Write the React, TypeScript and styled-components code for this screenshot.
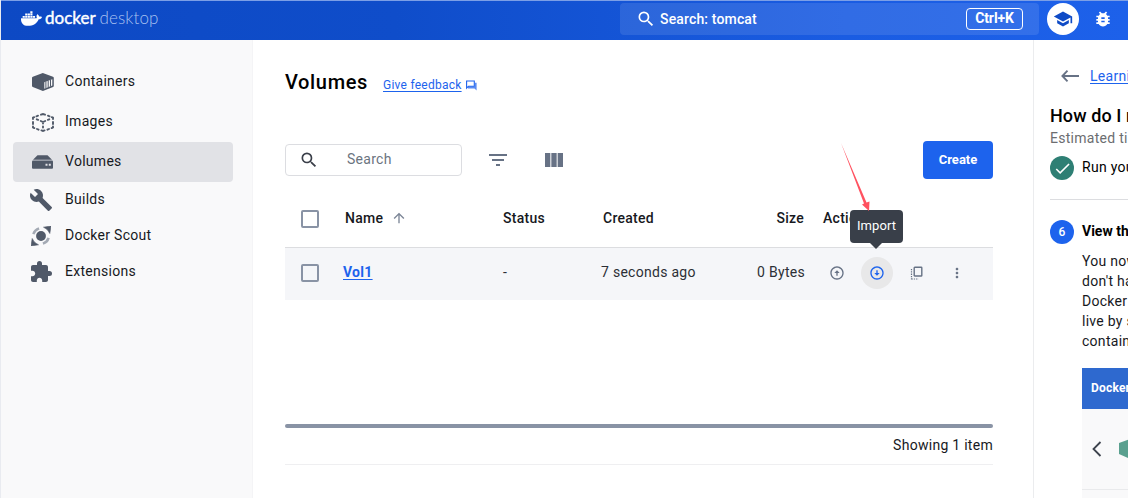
import React from 'react';
import styled, { createGlobalStyle } from 'styled-components';
import {
  MdSearch, MdFilterList, MdSchool, MdBugReport, MdBuild, MdExtension, MdArrowUpward,
  MdOutlineArrowCircleUp, MdOutlineArrowCircleDown, MdMoreVert, MdCheck,
} from 'react-icons/md';
import { FaDocker } from 'react-icons/fa';

const Global = createGlobalStyle`
  *, *::before, *::after { box-sizing: border-box; }
  body { margin: 0; background: #fff; overflow: hidden; }
  svg { display: block; flex: none; }
`;

const Window = styled.div`
  width: 1128px;
  height: 498px;
  overflow: hidden;
  display: flex;
  flex-direction: column;
  font-family: Roboto, 'Liberation Sans', sans-serif;
  font-size: 14px;
  line-height: 20px;
  letter-spacing: 0.28px;
  color: #17191e;
  white-space: nowrap;
  border-left: 1px solid #e9ebf0;
`;

const Header = styled.header`
  flex: none;
  height: 40px;
  display: flex;
  align-items: center;
  border-top: 1px solid #7c9fe6;
  background: linear-gradient(90deg, #0d49c4 0%, #0f4dca 35%, #1a5ce2 75%, #1d61ea 100%);
  color: #fff;
`;

const Brand = styled.div`
  display: flex;
  width: 619px;
  padding-left: 20px;
  align-items: center;
  gap: 3px;
  & > svg { margin-top: -4px; }
`;

const Wordmark = styled.span<{ $faint?: boolean }>`
  font-family: Lato, sans-serif;
  font-size: 17px;
  line-height: 20px;
  letter-spacing: ${p => (p.$faint ? '0.1px' : '0')};
  font-weight: ${p => (p.$faint ? 300 : 400)};
  -webkit-text-stroke: ${p => (p.$faint ? '0' : '0.4px #fff')};
  color: ${p => (p.$faint ? '#a9c1f0' : '#fff')};
`;

const BrandName = styled.div`
  margin-top: -4px;
`;

const GlobalSearch = styled.div`
  width: 419px;
  height: 32px;
  margin-top: -3px;
  padding: 0 16px 0 16px;
  border-radius: 4px;
  background: rgba(255, 255, 255, 0.1);
  display: flex;
  align-items: center;
`;

const SearchText = styled.span`
  flex: 1;
  margin-left: 4px;
  margin-top: -1px;
  letter-spacing: 0.15px;
  font-weight: 500;
`;

const Shortcut = styled.kbd`
  width: 57px;
  height: 22px;
  border: 1px solid #fff;
  border-radius: 4px;
  font: 700 14px/19px Roboto, sans-serif;
  letter-spacing: -0.1px;
  text-align: center;
`;

const RoundButton = styled.div`
  width: 32px;
  height: 32px;
  margin: -3px 14px 0 8px;
  border-radius: 50%;
  background: #fff;
  color: #0f4bc6;
  display: flex;
  align-items: center;
  justify-content: center;
`;

const BugButton = styled.span`
  margin-top: -3px;
`;

const Body = styled.div`
  flex: 1;
  display: flex;
  min-height: 0;
`;

const Sidebar = styled.nav`
  flex: none;
  width: 252px;
  padding: 22px 0 0 12px;
  background: #f9f9fa;
  border-right: 1px solid #f4f4f6;
`;

const NavItem = styled.div<{ $active?: boolean; $short?: boolean }>`
  width: 220px;
  height: ${p => (p.$short ? 36 : 40)}px;
  padding: 0 0 2px 16px;
  border-radius: 4px;
  display: flex;
  align-items: center;
  background: ${p => (p.$active ? '#e1e2e6' : 'transparent')};
`;

const NavIcon = styled.span<{ $shift?: number }>`
  width: 36px;
  padding-top: 2px;
  padding-left: ${p => p.$shift ?? 0}px;
  color: #505968;
`;

const Main = styled.main`
  flex: none;
  width: 780px;
  padding: 0 40px 0 32px;
  display: flex;
  flex-direction: column;
`;

const TitleRow = styled.div`
  display: flex;
  align-items: center;
  height: 84px;
`;

const Title = styled.h1`
  margin: 0 15px 0 0;
  font-size: 20px;
  line-height: 28px;
  font-weight: 500;
  letter-spacing: 0.65px;
  color: #000;
`;

const Link = styled.a<{ $size?: number; $bold?: boolean }>`
  color: #1d63ed;
  font-size: ${p => p.$size ?? 14}px;
  font-weight: ${p => (p.$bold ? 700 : 400)};
  text-decoration: underline;
  text-underline-offset: 2px;
`;

const FeedbackLink = styled.div`
  display: flex;
  align-items: center;
  gap: 4px;
  padding-top: 6px;
  letter-spacing: 0.25px;
`;

const Toolbar = styled.div`
  margin-top: 17px;
  height: 38px;
  display: flex;
  align-items: center;
  color: #677285;
`;

const SearchField = styled.div`
  width: 177px;
  height: 32px;
  margin-right: 24px;
  padding: 0 13px;
  border: 1px solid #dcdde1;
  border-radius: 4px;
  display: flex;
  align-items: center;
  gap: 28px;
  color: #6b7480;
  & > svg { color: #3a3f49; }
  & > span { margin-top: -2px; }
`;

const CreateButton = styled.button`
  margin-left: auto;
  width: 70px;
  height: 38px;
  padding: 0;
  border: 0;
  border-radius: 4px;
  background: #1d63ed;
  color: #fff;
  font: 700 13px/20px Roboto, sans-serif;
  letter-spacing: 0;
`;

const ColumnsIcon = styled.span`
  margin-left: 32px;
`;

const Row = styled.div<{ $head?: boolean }>`
  display: grid;
  grid-template-columns: 58px 160px 98px 127px 77px 1fr;
  align-items: center;
  height: ${p => (p.$head ? 60 : 52)}px;
  margin-top: ${p => (p.$head ? 9 : 0)}px;
  padding-bottom: ${p => (p.$head ? 0 : 4)}px;
  border-bottom: ${p => (p.$head ? '1px solid #dcdde0' : '0')};
  background: ${p => (p.$head ? '#fff' : '#f5f6f9')};
  font-weight: ${p => (p.$head ? 500 : 400)};
  color: ${p => (p.$head ? '#17191e' : '#2c2f36')};
`;

const Checkbox = styled.span`
  display: block;
  width: 18px;
  height: 18px;
  margin-left: 16px;
  margin-top: 2px;
  border: 2px solid #8993a5;
  border-radius: 2px;
`;

const Cell = styled.span<{ $right?: boolean; $indent?: number; $inset?: number }>`
  display: flex;
  align-items: center;
  gap: 8px;
  justify-content: ${p => (p.$right ? 'flex-end' : 'flex-start')};
  padding-left: ${p => p.$indent ?? 0}px;
  padding-right: ${p => p.$inset ?? 0}px;
  & > svg { margin-top: 1px; }
`;

const Actions = styled.div`
  display: flex;
  gap: 8px;
  padding-left: 16px;
  margin-top: 2px;
`;

const Action = styled.span<{ $hot?: boolean }>`
  position: relative;
  width: 32px;
  height: 32px;
  border-radius: 50%;
  display: flex;
  align-items: center;
  justify-content: center;
  background: ${p => (p.$hot ? '#e8e8e9' : 'transparent')};
  color: ${p => (p.$hot ? '#1d63ed' : '#677285')};
`;

const Tooltip = styled.span`
  position: absolute;
  left: -11px;
  bottom: 46px;
  width: 53px;
  height: 33px;
  border-radius: 4px;
  background: #393f49;
  color: #fff;
  font-size: 13px;
  line-height: 31px;
  letter-spacing: 0.05px;
  text-align: center;
  &::after {
    content: '';
    position: absolute;
    left: 20px;
    top: 33px;
    border: 6.5px solid transparent;
    border-top: 6px solid #393f49;
    border-bottom: 0;
  }
`;

const Pointer = styled.svg`
  position: absolute;
  left: -21px;
  bottom: 77px;
`;

const ScrollBar = styled.div`
  height: 4px;
  margin-top: 124px;
  border-radius: 2px;
  background: #8993a5;
`;

const Footer = styled.div`
  height: 37px;
  padding-top: 7px;
  border-bottom: 1px solid #efeff1;
  text-align: right;
`;

const Guide = styled.aside`
  flex: none;
  width: 420px;
  border-left: 1px solid #ebecee;
  padding: 26px 0 0 16px;
`;

const BackRow = styled.div`
  display: flex;
  align-items: center;
  gap: 10px;
  padding-left: 11px;
  height: 20px;
  color: #677285;
`;

const GuideTitle = styled.h2`
  margin: 18px 0 0;
  font-size: 18px;
  line-height: 24px;
  font-weight: 500;
  letter-spacing: 0.1px;
  color: #000;
`;

const Estimate = styled.div`
  margin-bottom: 8px;
  color: #6c6d70;
`;

const Step = styled.div<{ $bold?: boolean }>`
  display: flex;
  align-items: center;
  gap: 8px;
  height: 24px;
  font-weight: ${p => (p.$bold ? 700 : 400)};
  letter-spacing: ${p => (p.$bold ? '0' : '0.28px')};
  color: #000;
`;

const StepBadge = styled.span<{ $done?: boolean }>`
  width: 24px;
  height: 24px;
  border-radius: 50%;
  display: flex;
  align-items: center;
  justify-content: center;
  background: ${p => (p.$done ? '#2e7f74' : '#1d63ed')};
  color: #fff;
  font-size: 12px;
  font-weight: 500;
`;

const StepLabel = styled.span`
  margin-top: -2px;
`;

const Rule = styled.hr`
  height: 1px;
  margin: 19px 0 20px;
  border: 0;
  background: #dcdde0;
`;

const Paragraph = styled.p`
  margin: 7px 0 0 32px;
`;

const Preview = styled.div`
  margin: 17px 0 0 32px;
  background: #f9f9fa;
`;

const PreviewBar = styled.div`
  height: 41px;
  padding-left: 9px;
  background: #2e69cf;
  color: #fff;
  font: 700 12px/40px Roboto, sans-serif;
  letter-spacing: 0.2px;
`;

const PreviewRow = styled.div`
  height: 81px;
  display: flex;
  align-items: center;
  gap: 17px;
  padding-left: 10px;
  border-bottom: 1px solid #e9eaec;
`;

const PreviewRest = styled.div`
  height: 9px;
`;

const ContainerIcon = () => (
  <svg width="22" height="18" viewBox="0 0 22 18">
    <path d="M10.800 0 L21 3.700 Q21.800 4 21.800 4.800 V13 Q21.800 13.700 21.100 14 L10.900 18 L0.800 14 Q0 13.700 0 13 V4.800 Q0 4 0.800 3.700Z" fill="#505968" />
    <path d="M12.300 9.300 L20.300 6.200 V12.600 L12.300 15.800Z" fill="#f9f9fa" />
    <path d="M13.900 8.500v7M16.200 7.600v7M18.500 6.800v6.800" stroke="#505968" strokeWidth="1" />
  </svg>
);

const ImageIcon = () => (
  <svg width="22" height="19" viewBox="0 0 22 19" fill="none" stroke="#505968" strokeWidth="1.900" strokeLinecap="round">
    <path d="M9 1.700 L11 1 L13 1.700M16 2.700l1.500.6M6 2.700l-1.500.6M1 6V4.700l1.200-.5M21 6V4.700l-1.200-.5M1 9v2M21 9v2M1 13.500v1l1.300.6M21 13.500v1l-1.300.6M5 16l1.500.7M17 16l-1.500.7M9.500 17.400l1.500.5 1.500-.5M4.800 6.300l1.300.5M17.200 6.300l-1.300.5M8.800 8l2.200 1 2.200-1M11 9v1.500M11 13.500v1" />
  </svg>
);

const VolumeIcon = () => (
  <svg width="21" height="14" viewBox="0 0 21 14">
    <path d="M5.500.3h10L20 4.800H1Z" fill="#505968" />
    <path d="M1 5.500h19q1 0 1 1v6.300q0 1-1 1H1q-1 0-1-1V6.500q0-1 1-1Z" fill="#505968" />
    <path d="M13.500 8.800h2v2h-2zM16.800 8.800h2v2h-2z" fill="#e1e2e6" />
  </svg>
);

const ScoutIcon = () => (
  <svg width="20" height="20" viewBox="0 0 20 20">
    <path d="M2.800 8.200A8 8 0 0 1 8.200 2.800M17.200 11.800a8 8 0 0 1-5.400 5.400" fill="none" stroke="#a4aab4" strokeWidth="3.400" />
    <circle cx="10" cy="10" r="6.500" fill="#f9f9fa" />
    <circle cx="10" cy="10" r="4.900" fill="#505968" />
    <path d="M12.500 1.200 L20 0 L18.800 7.500 Q17 3 12.500 1.200ZM7.500 18.800 L0 20 L1.200 12.500 Q3 17 7.500 18.800Z" fill="#505968" stroke="#505968" strokeWidth=".6" />
  </svg>
);

const FeedbackIcon = () => (
  <svg width="11" height="11" viewBox="0 0 11 11">
    <path d="M2 6.500V8.500H8.500L10.600 10.600V2.800H8.800V6.500Z" fill="#5a8bf2" />
    <path d="M.6 8.200V1H8.300V6.200H2.500Z" fill="none" stroke="#1d63ed" strokeWidth="1.100" />
  </svg>
);

const ThreeColumns = () => (
  <svg width="24" height="24" viewBox="0 0 24 24" fill="currentColor">
    <path d="M14.670 5v14H9.330V5h5.340zm1 14H21V5h-5.330v14zm-7.340 0V5H3v14h5.330z" />
  </svg>
);

const CloneIcon = () => (
  <svg width="14" height="14" viewBox="0 0 14 14" fill="none" stroke="currentColor">
    <rect x="4.200" y="1.200" width="7.600" height="8.800" rx=".6" strokeWidth="1.400" />
    <path d="M1.500 3v10.500M1.500 13h7" strokeWidth="1.200" strokeDasharray="1.300 1" />
  </svg>
);

const BackArrow = () => (
  <svg width="19" height="14" viewBox="0 0 19 14" fill="none" stroke="currentColor" strokeWidth="1.900">
    <path d="M18 7H1.500M6.500 1.700L1.400 7L6.500 12.300" />
  </svg>
);

const navItems = [
  { label: 'Containers', icon: <ContainerIcon />, shift: 3 },
  { label: 'Images', icon: <ImageIcon />, shift: 3 },
  { label: 'Volumes', icon: <VolumeIcon />, shift: 3, active: true },
  { label: 'Builds', icon: <MdBuild size={24} />, short: true },
  { label: 'Docker Scout', icon: <ScoutIcon />, shift: 2, short: true },
  { label: 'Extensions', icon: <MdExtension size={24} />, short: true },
];

const paragraph = [
  'You now have a volume. You',
  "don't have to mount it again.",
  'Docker volumes let your data',
  'live by separating it from the',
  'container lifecycle.',
];

export default function App() {
  return (
    <Window>
      <Global />
      <Header>
        <Brand>
          <FaDocker size={21} />
          <BrandName>
            <Wordmark>docker </Wordmark>
            <Wordmark $faint>desktop</Wordmark>
          </BrandName>
        </Brand>
        <GlobalSearch>
          <MdSearch size={20} />
          <SearchText>Search: tomcat</SearchText>
          <Shortcut>Ctrl+K</Shortcut>
        </GlobalSearch>
        <RoundButton><MdSchool size={20} /></RoundButton>
        <BugButton><MdBugReport size={20} /></BugButton>
      </Header>
      <Body>
        <Sidebar>
          {navItems.map(n => (
            <NavItem key={n.label} $active={n.active} $short={n.short}>
              <NavIcon $shift={n.shift}>{n.icon}</NavIcon>
              {n.label}
            </NavItem>
          ))}
        </Sidebar>
        <Main>
          <TitleRow>
            <Title>Volumes</Title>
            <FeedbackLink>
              <Link $size={12}>Give feedback</Link>
              <FeedbackIcon />
            </FeedbackLink>
          </TitleRow>
          <Toolbar>
            <SearchField>
              <MdSearch size={20} />
              <span>Search</span>
            </SearchField>
            <MdFilterList size={24} />
            <ColumnsIcon><ThreeColumns /></ColumnsIcon>
            <CreateButton>Create</CreateButton>
          </Toolbar>
          <Row $head>
            <Checkbox />
            <Cell $indent={2}>Name <MdArrowUpward size={16} color="#7b8596" /></Cell>
            <Cell>Status</Cell>
            <Cell $indent={2}>Created</Cell>
            <Cell $right $inset={1}>Size</Cell>
            <Cell $indent={18}>Actions</Cell>
          </Row>
          <Row>
            <Checkbox />
            <Cell><Link $bold>Vol1</Link></Cell>
            <Cell $indent={-2}>-</Cell>
            <Cell>7 seconds ago</Cell>
            <Cell $right>0 Bytes</Cell>
            <Actions>
              <Action><MdOutlineArrowCircleUp size={16} /></Action>
              <Action $hot>
                <MdOutlineArrowCircleDown size={16} />
                <Tooltip>Import</Tooltip>
                <Pointer width="32" height="70" viewBox="0 0 32 70">
                  <path d="M1 1 L26.500 60.500 L29.500 59.500 L29 69 L22 62.500 L24 61.500 Z" fill="#ff5260" />
                </Pointer>
              </Action>
              <Action><CloneIcon /></Action>
              <Action><MdMoreVert size={16} /></Action>
            </Actions>
          </Row>
          <ScrollBar />
          <Footer>Showing 1 item</Footer>
        </Main>
        <Guide>
          <BackRow><BackArrow /><Link>Learning center</Link></BackRow>
          <GuideTitle>How do I run a container?</GuideTitle>
          <Estimate>Estimated time: 5 minutes</Estimate>
          <Step><StepBadge $done><MdCheck size={19} /></StepBadge><StepLabel>Run your container</StepLabel></Step>
          <Rule />
          <Step $bold><StepBadge>6</StepBadge><StepLabel>View the volume</StepLabel></Step>
          <Paragraph>
            {paragraph.map(line => <React.Fragment key={line}>{line}<br /></React.Fragment>)}
          </Paragraph>
          <Preview>
            <PreviewBar>Docker Desktop</PreviewBar>
            <PreviewRow>
              <svg width="10" height="16" viewBox="0 0 10 16" fill="none" stroke="#3d434d" strokeWidth="1.800">
                <path d="M8.500 1L1.500 8l7 7" />
              </svg>
              <svg width="22" height="20" viewBox="0 0 22 20">
                <path d="M11 0L22 4v11l-11 5L0 15V4Z" fill="#5aa08f" />
              </svg>
            </PreviewRow>
            <PreviewRest />
          </Preview>
        </Guide>
      </Body>
    </Window>
  );
}
